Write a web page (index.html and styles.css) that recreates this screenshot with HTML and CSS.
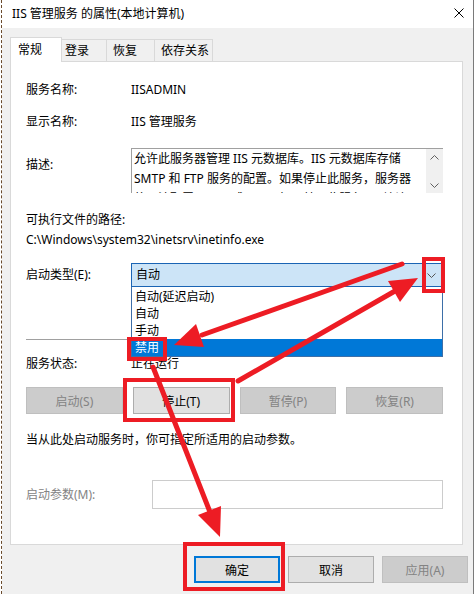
FILE: index.html
```html
<!DOCTYPE html>
<html lang="zh-CN">
<head>
    <meta charset="UTF-8">
    <meta name="viewport" content="width=device-width, initial-scale=1.0">
    <title>IIS 管理服务 的属性(本地计算机)</title>
    <link rel="stylesheet" href="styles.css">
</head>
<body>

    <div class="window">
        <div class="titlebar">
            <span class="title">IIS 管理服务 的属性(本地计算机)</span>
            <svg class="close" width="10" height="10" viewBox="0 0 10 10">
                <path d="M0.5 0.5 L9.5 9.5 M9.5 0.5 L0.5 9.5" stroke="#000" stroke-width="1"/>
            </svg>
        </div>

        <div class="client">
            <div class="tabs">
                <div class="tab active">常规</div>
                <div class="tab tab-login">登录</div>
                <div class="tab tab-recover">恢复</div>
                <div class="tab tab-deps">依存关系</div>
            </div>

            <div class="panel">
                <div class="row">
                    <span>服务名称:</span>
                    <span>IISADMIN</span>
                </div>
                <div class="row row-display">
                    <span>显示名称:</span>
                    <span>IIS 管理服务</span>
                </div>
                <div class="row row-desc">
                    <span class="desc-label">描述:</span>
                    <div class="textbox">
                        <div class="textbox-text">
                            <div>允许此服务器管理 IIS 元数据库。IIS 元数据库存储</div>
                            <div>SMTP 和 FTP 服务的配置。如果停止此服务，服务器</div>
                            <div>将无法配置 SMTP 或 FTP。如果禁用此服务，则任何</div>
                        </div>
                        <div class="scrollbar">
                            <svg width="9" height="5" viewBox="0 0 9 5"><path d="M0.5 4.5 L4.5 0.5 L8.5 4.5" fill="none" stroke="#606060"/></svg>
                            <svg width="9" height="5" viewBox="0 0 9 5"><path d="M0.5 0.5 L4.5 4.5 L8.5 0.5" fill="none" stroke="#606060"/></svg>
                        </div>
                    </div>
                </div>

                <div class="path-label">可执行文件的路径:</div>
                <div class="path-value">C:\Windows\system32\inetsrv\inetinfo.exe</div>

                <div class="row row-startup">
                    <span>启动类型(E):</span>
                    <div class="combo">
                        <span>自动</span>
                        <svg width="9" height="5" viewBox="0 0 9 5"><path d="M0.5 0.5 L4.5 4.5 L8.5 0.5" fill="none" stroke="#555"/></svg>
                        <ul class="dropdown">
                            <li>自动(延迟启动)</li>
                            <li>自动</li>
                            <li>手动</li>
                            <li class="selected">禁用</li>
                        </ul>
                    </div>
                </div>

                <div class="separator"></div>

                <div class="row row-status">
                    <span>服务状态:</span>
                    <span>正在运行</span>
                </div>

                <div class="service-buttons">
                    <button class="btn" disabled>启动(S)</button>
                    <button class="btn">停止(T)</button>
                    <button class="btn" disabled>暂停(P)</button>
                    <button class="btn" disabled>恢复(R)</button>
                </div>

                <div class="note">当从此处启动服务时，你可指定所适用的启动参数。</div>

                <div class="row row-params">
                    <span class="muted">启动参数(M):</span>
                    <div class="param-input"></div>
                </div>
            </div>

            <div class="footer">
                <button class="btn btn-default">确定</button>
                <button class="btn">取消</button>
                <button class="btn" disabled>应用(A)</button>
            </div>
        </div>
    </div>

    <!-- red annotations drawn over the screenshot -->
    <svg class="marks" width="475" height="594" viewBox="0 0 475 594">
        <g fill="none" stroke="#ed1c24" stroke-width="4">
            <rect x="424" y="259" width="19" height="32"/>
            <rect x="129" y="339" width="36" height="20"/>
            <rect x="125" y="380" width="108" height="40"/>
            <rect x="185" y="544" width="98" height="45"/>
        </g>
        <g stroke="#ed1c24" stroke-width="5" stroke-linecap="round">
            <line x1="402" y1="264" x2="202" y2="335"/>
            <line x1="238" y1="381" x2="395" y2="291"/>
            <line x1="153" y1="367" x2="210" y2="512"/>
        </g>
        <g fill="#ed1c24">
            <polygon points="174,345 196,324 204,347"/>
            <polygon points="418,278 388,281 400,302"/>
            <polygon points="220,537 221,506 198,515"/>
        </g>
    </svg>

</body>
</html>
```

FILE: styles.css
```css
body {
    margin: 0;
    position: relative;
    background-color: #ffffff;
    font-family: "Noto Sans", "Noto Sans CJK SC", sans-serif;
    font-size: 12px;
    color: #000000;
}

.window {
    margin-left: 1px;
    width: 473px;
    height: 594px;
    box-sizing: border-box;
    border-left: 1px dashed #6b4a2c;
    border-right: 1px solid #7a7a7a;
    overflow: hidden;
}

.titlebar {
    height: 28px;
    display: flex;
    align-items: center;
    justify-content: space-between;
    padding: 0 9px 2px 10px;
    box-sizing: border-box;
    background-color: #ffffff;
}

.client {
    height: 566px;
    background-color: #f0f0f0;
    padding-top: 9px;
    box-sizing: border-box;
}

/* Tabs */
.tabs {
    display: flex;
    align-items: flex-end;
    margin-left: 8px;
    height: 24px;
}

.tab {
    height: 22px;
    line-height: 22px;
    box-sizing: border-box;
    border: 1px solid #d9d9d9;
    border-bottom: none;
    border-left: none;
    background-color: #f0f0f0;
}

.tab.active {
    width: 52px;
    height: 25px;
    line-height: 24px;
    padding-left: 7px;
    border-left: 1px solid #d9d9d9;
    background-color: #ffffff;
    position: relative;
    margin-bottom: -1px;
}

.tab-login {
    width: 45px;
    padding-left: 3px;
}

.tab-recover {
    width: 48px;
    padding-left: 6px;
}

.tab-deps {
    width: 58px;
    padding-left: 6px;
}

/* Page panel */
.panel {
    margin-left: 8px;
    width: 453px;
    height: 484px;
    box-sizing: border-box;
    border: 1px solid #d9d9d9;
    background-color: #ffffff;
    padding: 20px 19px 0 15px;
    line-height: 16px;
}

.row {
    display: grid;
    grid-template-columns: 105px 1fr;
    align-items: center;
}

.row-display {
    margin-top: 16px;
}

.row-desc {
    margin-top: 18px;
    align-items: start;
}

.desc-label {
    padding-top: 9px;
}

.textbox {
    height: 45px;
    display: flex;
    box-sizing: border-box;
    border-top: 1px solid #a0a0a0;
    border-left: 1px solid #a0a0a0;
    overflow: hidden;
}

.textbox-text {
    flex: 1;
    padding-left: 2px;
    line-height: 20px;
    white-space: nowrap;
    overflow: hidden;
}

.scrollbar {
    width: 17px;
    background-color: #f0f0f0;
    display: flex;
    flex-direction: column;
    align-items: center;
    justify-content: space-between;
    padding: 6px 0 5px;
    box-sizing: border-box;
}

.path-label {
    margin-top: 19px;
}

.path-value {
    margin-top: 4px;
}

/* Startup type combo */
.row-startup {
    margin-top: 15px;
}

.combo {
    position: relative;
    height: 24px;
    box-sizing: border-box;
    border: 1px solid #1a64b4;
    background-color: #cce4f7;
    display: flex;
    align-items: center;
    justify-content: space-between;
    padding: 0 6px 0 4px;
}

.dropdown {
    position: absolute;
    top: 23px;
    left: -1px;
    right: -1px;
    z-index: 2;
    margin: 0;
    padding: 1px 0 0;
    list-style-type: none;
    background-color: #ffffff;
    border: 1px solid #3d6fa8;
    border-top: none;
    box-sizing: border-box;
    height: 70px;
}

.dropdown li {
    height: 17px;
    line-height: 17px;
    padding-left: 3px;
}

.dropdown .selected {
    background-color: #0078d7;
    color: #ffffff;
    height: 17px;
}

.separator {
    margin-top: 52px;
    height: 1px;
    background-color: #a0a0a0;
}

.row-status {
    margin-top: 16px;
}

/* Buttons */
.btn {
    font-family: inherit;
    font-size: 12px;
    color: #000000;
    background-color: #e1e1e1;
    border: 1px solid #adadad;
    height: 27px;
    padding: 0;
    box-sizing: border-box;
}

.btn:disabled {
    background-color: #cccccc;
    border-color: #bfbfbf;
    color: #838383;
}

.btn-default {
    border: 2px solid #0078d7;
}

.service-buttons {
    margin-top: 15px;
    display: flex;
    gap: 10px;
}

.service-buttons .btn {
    flex: 1;
}

.note {
    margin-top: 18px;
}

.row-params {
    margin-top: 32px;
    grid-template-columns: 126px 1fr;
}

.muted {
    color: #838383;
}

.param-input {
    height: 29px;
    box-sizing: border-box;
    border: 1px solid #cccccc;
    background-color: #ffffff;
}

.footer {
    margin-top: 11px;
    display: flex;
    justify-content: flex-end;
    gap: 8px;
    padding-right: 5px;
}

.footer .btn {
    width: 86px;
}

.marks {
    position: absolute;
    top: 0;
    left: 0;
    z-index: 5;
    pointer-events: none;
}
```
